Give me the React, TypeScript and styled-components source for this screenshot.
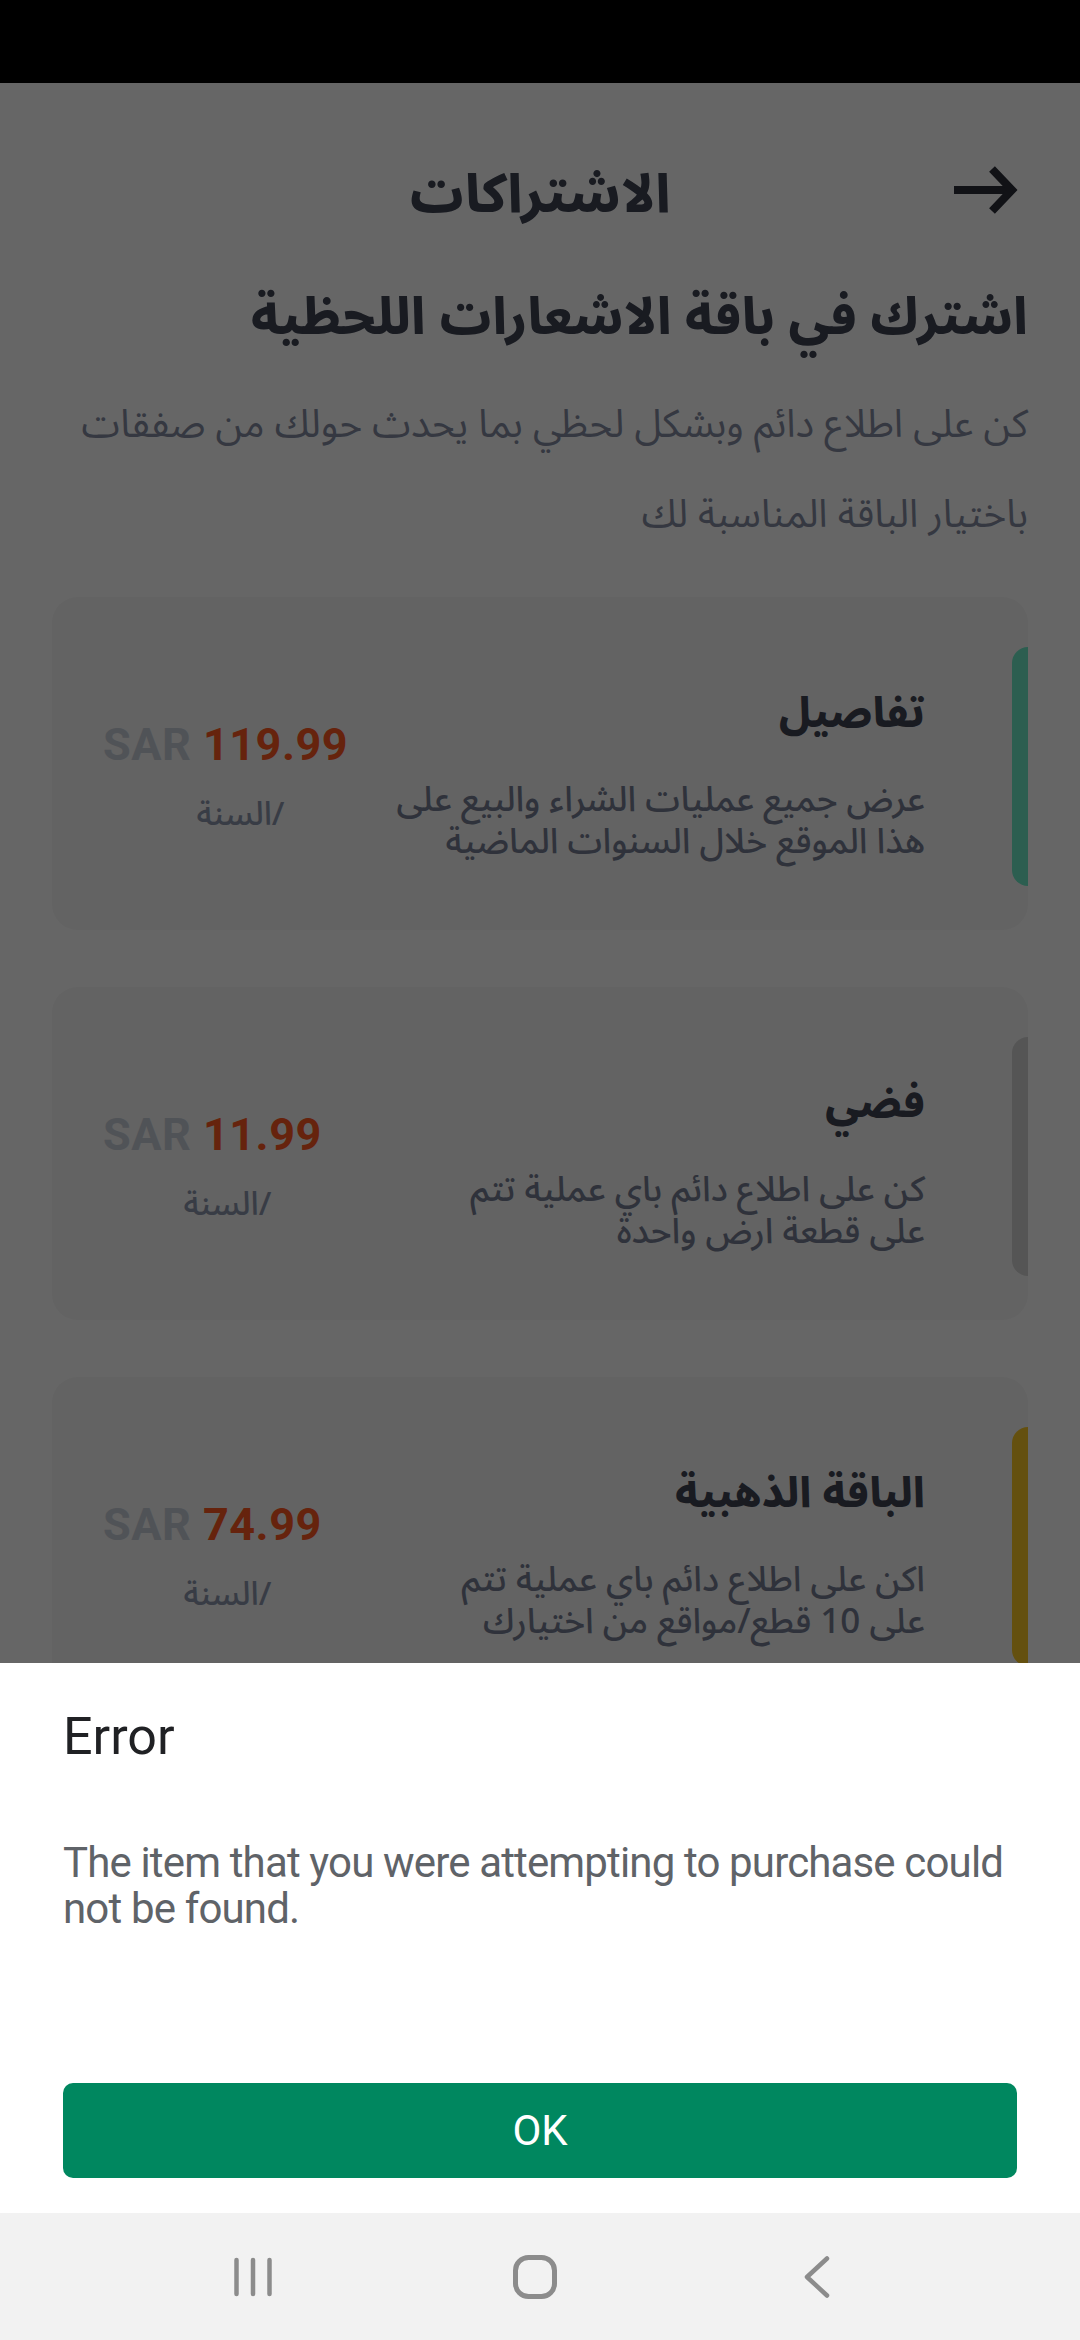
import React from "react";
import styled, { createGlobalStyle } from "styled-components";

const GlobalStyle = createGlobalStyle`
  html, body { margin: 0; padding: 0; background: #000; }
  body { width: 1080px; height: 2340px; overflow: hidden; font-family: Roboto, "Liberation Sans", sans-serif; }
  * { box-sizing: border-box; }
`;

const Phone = styled.div`
  width: 1080px;
  height: 2340px;
  display: flex;
  flex-direction: column;
  background: #fff;
`;

const StatusBar = styled.div`
  flex: none;
  height: 83px;
  background: #000;
`;

const Screen = styled.div`
  position: relative;
  flex: 1;
  overflow: hidden;
  background: #ffffff;
`;

const Page = styled.main`
  direction: rtl;
  display: flex;
  flex-direction: column;
  padding: 67px 52px 0;
  font-family: "Noto Sans Arabic", "DejaVu Sans", sans-serif;
`;

const Header = styled.header`
  height: 90px;
  display: grid;
  grid-template-columns: 1fr auto 1fr;
  align-items: center;
  padding: 0 10px;
`;

const BackButton = styled.button`
  justify-self: start;
  border: 0;
  padding: 0;
  background: none;
  display: flex;
  color: #2b2d37;
  margin-bottom: 10px;
`;

const HeaderTitle = styled.h1`
  margin: 0;
  font-size: 53px;
  font-weight: 800;
  color: #3f4454;
  line-height: 64px;
`;

const Heading = styled.h2`
  margin: 46px 0 0;
  font-size: 51px;
  line-height: 64px;
  font-weight: 800;
  color: #3f4454;
`;

const Lead = styled.p`
  margin: 30px 0 0;
  font-size: 39px;
  line-height: 90px;
  font-weight: 400;
  color: #858ca2;
  white-space: pre-line;
`;

const CardList = styled.div`
  margin-top: 37px;
  display: flex;
  flex-direction: column;
  gap: 57px;
`;

const Card = styled.section`
  height: 333px;
  display: flex;
  align-items: flex-start;
  background: #f7f7f7;
  border-radius: 26px;
`;

const AccentBar = styled.div<{ $color: string }>`
  flex: none;
  width: 16px;
  height: 239px;
  margin-top: 50px;
  background: ${(p) => p.$color};
  border-radius: 16px 0 0 16px;
`;

const Info = styled.div`
  flex: 1;
  min-width: 0;
  margin-inline-start: 87px;
  margin-top: 88px;
  display: flex;
  flex-direction: column;
`;

const PlanTitle = styled.h3`
  margin: 0;
  font-size: 42px;
  line-height: 58px;
  font-weight: 800;
  color: #3f4454;
`;

const PlanDesc = styled.p`
  margin: 36px 0 0;
  font-size: 35px;
  line-height: 42px;
  font-weight: 500;
  color: #767e93;
  white-space: pre;
`;

const PriceCol = styled.div`
  flex: none;
  margin-top: 122px;
  padding-inline-end: 51px;
  display: flex;
  flex-direction: column;
  align-items: center;
`;

const Price = styled.div`
  direction: ltr;
  font-family: Roboto, "Liberation Sans", sans-serif;
  font-weight: 700;
  font-size: 45px;
  line-height: 52px;
  letter-spacing: 0.5px;
  white-space: nowrap;
`;

const Currency = styled.span`
  color: #c9cfda;
`;

const Amount = styled.span`
  color: #ff5722;
`;

const Period = styled.div`
  margin-top: 25px;
  padding-left: 30px;
  font-size: 33px;
  line-height: 38px;
  font-weight: 500;
  color: #8c96ad;
`;

const Scrim = styled.div`
  position: absolute;
  inset: 0;
  background: rgba(0, 0, 0, 0.6);
`;

const Dialog = styled.div`
  position: absolute;
  left: 0;
  right: 0;
  bottom: 0;
  background: #fff;
  padding: 42px 63px 35px;
  display: flex;
  flex-direction: column;
  font-family: Roboto, "Liberation Sans", sans-serif;
`;

const DialogTitle = styled.h2`
  margin: 0;
  font-size: 52px;
  line-height: 64px;
  font-weight: 400;
  color: #202124;
`;

const DialogBody = styled.p`
  margin: 71px 0 0;
  font-size: 42px;
  line-height: 46px;
  letter-spacing: -0.85px;
  color: #5f6368;
`;

const OkButton = styled.button`
  margin-top: 151px;
  height: 95px;
  border: 0;
  border-radius: 10px;
  background: #00875f;
  color: #fff;
  font-family: Roboto, "Liberation Sans", sans-serif;
  font-size: 42px;
  font-weight: 400;
`;

const NavBar = styled.nav`
  flex: none;
  height: 127px;
  background: #f2f2f2;
  display: grid;
  grid-template-columns: repeat(3, 282px);
  justify-content: center;
  justify-items: center;
  align-items: center;
  padding-right: 10px;
  color: #8c8c8c;
`;

const NavIcon = styled.svg`
  display: block;
`;

type Plan = {
  title: string;
  desc: string;
  amount: string;
  color: string;
};

const plans: Plan[] = [
  {
    title: "تفاصيل",
    desc: "عرض جميع عمليات الشراء والبيع على\nهذا الموقع خلال السنوات الماضية",
    amount: "119.99",
    color: "#6eebc8",
  },
  {
    title: "فضي",
    desc: "كن على اطلاع دائم باي عملية تتم\nعلى قطعة ارض واحدة",
    amount: "11.99",
    color: "#d4d4d4",
  },
  {
    title: "الباقة الذهبية",
    desc: "اكن على اطلاع دائم باي عملية تتم\nعلى 10 قطع/مواقع من اختيارك",
    amount: "74.99",
    color: "#fac826",
  },
];

const leadText = "كن على اطلاع دائم وبشكل لحظي بما يحدث حولك من صفقات\nباختيار الباقة المناسبة لك";

export default function App() {
  return (
    <Phone>
      <GlobalStyle />
      <StatusBar />
      <Screen>
        <Page>
          <Header>
            <BackButton aria-label="رجوع">
              <svg width="64" height="50" viewBox="0 0 64 50" fill="none" stroke="currentColor" strokeWidth="8">
                <line x1="0" y1="25" x2="56" y2="25" />
                <polyline points="38,4 58,25 38,46" strokeLinejoin="miter" />
              </svg>
            </BackButton>
            <HeaderTitle>الاشتراكات</HeaderTitle>
            <span />
          </Header>
          <Heading>اشترك في باقة الاشعارات اللحظية</Heading>
          <Lead>{leadText}</Lead>
          <CardList>
            {plans.map((p) => (
              <Card key={p.title}>
                <AccentBar $color={p.color} />
                <Info>
                  <PlanTitle>{p.title}</PlanTitle>
                  <PlanDesc>{p.desc}</PlanDesc>
                </Info>
                <PriceCol>
                  <Price>
                    <Currency>SAR</Currency> <Amount>{p.amount}</Amount>
                  </Price>
                  <Period>/السنة</Period>
                </PriceCol>
              </Card>
            ))}
          </CardList>
        </Page>
        <Scrim />
        <Dialog role="alertdialog">
          <DialogTitle>Error</DialogTitle>
          <DialogBody>The item that you were attempting to purchase could not be found.</DialogBody>
          <OkButton>OK</OkButton>
        </Dialog>
      </Screen>
      <NavBar>
        <NavIcon width="40" height="40" viewBox="0 0 40 40" fill="none" stroke="currentColor" strokeWidth="4.5" strokeLinecap="round">
          <line x1="3.5" y1="3" x2="3.5" y2="37" />
          <line x1="20" y1="3" x2="20" y2="37" />
          <line x1="36.5" y1="3" x2="36.5" y2="37" />
        </NavIcon>
        <NavIcon width="44" height="44" viewBox="0 0 44 44" fill="none" stroke="currentColor" strokeWidth="5">
          <rect x="2.5" y="2.5" width="39" height="39" rx="13" />
        </NavIcon>
        <NavIcon width="26" height="42" viewBox="0 0 26 42" fill="none" stroke="currentColor" strokeWidth="4.5" strokeLinecap="round" strokeLinejoin="round">
          <polyline points="23,2.5 3,21 23,39.5" />
        </NavIcon>
      </NavBar>
    </Phone>
  );
}
